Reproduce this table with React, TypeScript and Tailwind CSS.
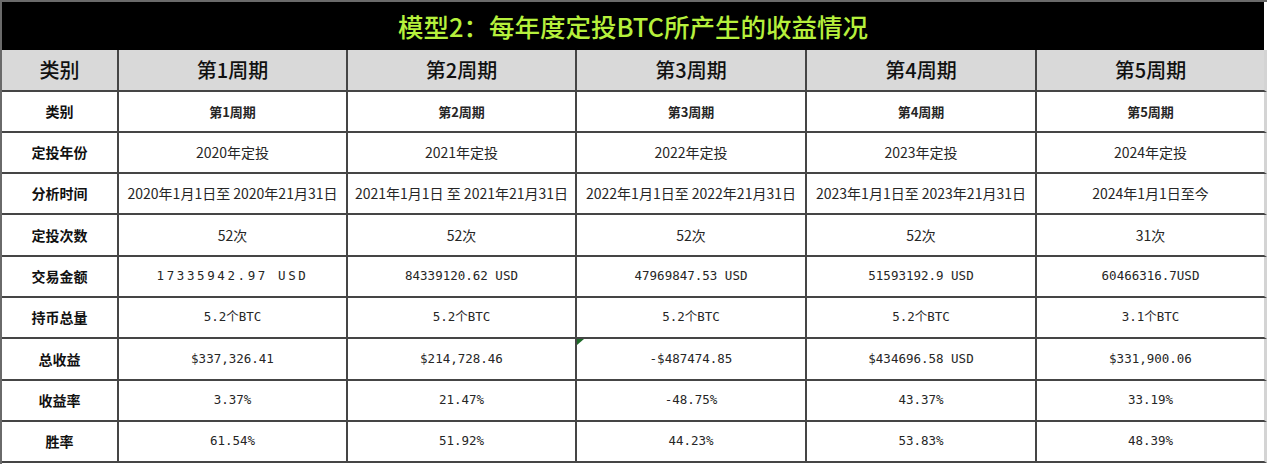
import React from "react";

const cjk = '"Noto Sans CJK SC", "Noto Sans", sans-serif';
const mono = '"DejaVu Sans Mono", "Noto Sans CJK SC", monospace';

const cols = ["第1周期", "第2周期", "第3周期", "第4周期", "第5周期"];

type Row = { label: string; vals: string[]; mono?: boolean; h: string; bold?: boolean };

const rows: Row[] = [
  { label: "类别", vals: cols, h: "h-[41px]", bold: true },
  { label: "定投年份", vals: ["2020年定投", "2021年定投", "2022年定投", "2023年定投", "2024年定投"], h: "h-[41px]" },
  {
    label: "分析时间",
    vals: [
      "2020年1月1日至 2020年21月31日",
      "2021年1月1日 至 2021年21月31日",
      "2022年1月1日至 2022年21月31日",
      "2023年1月1日至 2023年21月31日",
      "2024年1月1日至今",
    ],
    h: "h-[41px]",
  },
  { label: "定投次数", vals: ["52次", "52次", "52次", "52次", "31次"], h: "h-[42px]" },
  {
    label: "交易金额",
    vals: ["17335942.97 USD", "84339120.62 USD", "47969847.53 USD", "51593192.9 USD", "60466316.7USD"],
    mono: true,
    h: "h-[41px]",
  },
  { label: "持币总量", vals: ["5.2个BTC", "5.2个BTC", "5.2个BTC", "5.2个BTC", "3.1个BTC"], mono: true, h: "h-[41px]" },
  {
    label: "总收益",
    vals: ["$337,326.41", "$214,728.46", "-$487474.85", "$434696.58 USD", "$331,900.06"],
    mono: true,
    h: "h-[42px]",
  },
  { label: "收益率", vals: ["3.37%", "21.47%", "-48.75%", "43.37%", "33.19%"], mono: true, h: "h-[41px]" },
  { label: "胜率", vals: ["61.54%", "51.92%", "44.23%", "53.83%", "48.39%"], mono: true, h: "h-[41px]" },
];

export default function App() {
  return (
    <div
      className="w-[1267px] h-[464px] bg-white border-t-2 border-l-2 border-[#6a6a6a] overflow-hidden"
      style={{ fontFamily: cjk }}
    >
      <div className="h-[48px] bg-black flex items-center justify-center mr-[3px]">
        <span className="text-[25.5px] font-medium text-[#b6f03c] leading-none">
          模型2：每年度定投BTC所产生的收益情况
        </span>
      </div>
      <div className="grid grid-cols-[117px_229px_229px_230px_230px_1fr]">
        <div className="h-[42px] bg-[#d9d9d9] border-r-2 border-b-2 border-[#454545] flex items-center justify-center text-[20px] font-medium text-[#111]">
          类别
        </div>
        {cols.map((c, i) => (
          <div
            key={c}
            className={
              "h-[42px] bg-[#d9d9d9] border-b-2 border-[#454545] flex items-center justify-center text-[20px] font-medium text-[#111] " +
              (i === 4 ? "border-r-[3px] border-r-[#d4d4d4]" : "border-r-2")
            }
          >
            {c}
          </div>
        ))}
        {rows.map((r, ri) => (
          <React.Fragment key={r.label}>
            <div
              className={
                r.h +
                " border-r-2 border-b-2 border-[#454545] flex items-center justify-center text-[14px] font-bold text-[#111]"
              }
            >
              {r.label}
            </div>
            {r.vals.map((v, i) => (
              <div
                key={i}
                className={
                  r.h +
                  " relative border-b-2 border-[#454545] flex items-center justify-center text-[#262626] whitespace-nowrap " +
                  (i === 4 ? "border-r-[3px] border-r-[#d4d4d4] " : "border-r-2 ") +
                  (r.bold ? "text-[13px] font-bold text-[#111] " : r.mono ? "text-[12.5px] " : "text-[14px] ") +
                  (r.mono && ri === 4 && i === 0 ? "tracking-[2.6px]" : "")
                }
                style={r.mono ? { fontFamily: mono } : undefined}
              >
                {v}
                {ri === 6 && i === 2 && (
                  <svg className="absolute left-0 top-0" width="7" height="6" viewBox="0 0 7 6">
                    <polygon points="0,0 7,0 0,6" fill="#1f6b2a" />
                  </svg>
                )}
              </div>
            ))}
          </React.Fragment>
        ))}
      </div>
    </div>
  );
}
